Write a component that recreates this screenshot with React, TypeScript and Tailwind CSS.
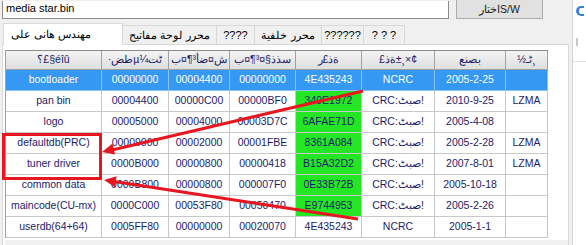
import React from 'react';

const headers = ['؟£§éîû', '·طضµ¼ٹت', 'ش¤ضأ³¶¤ب', 'سذذ§¤³¶¤ب', 'ةذ£ر', '£ةذ±¸×¢', 'بصنع', '½ٹـ¸'];

const rows = [
  ['bootloader', '00000000', '00004400', '00000000', '4E435243', 'NCRC', '2005-2-25', ''],
  ['pan bin', '00004400', '00000C00', '00000BF0', '349E1972', 'CRC', '2010-9-25', 'LZMA'],
  ['logo', '00005000', '00004000', '00003D7C', '6AFAE71D', 'CRC', '2005-4-08', ''],
  ['defaultdb(PRC)', '00009000', '00002000', '00001FBE', '8361A084', 'CRC', '2005-2-28', 'LZMA'],
  ['tuner driver', '0000B000', '00000800', '00000418', 'B15A32D2', 'CRC', '2007-8-01', 'LZMA'],
  ['common data', '0000B800', '00000800', '000007F0', '0E33B72B', 'CRC', '2005-10-18', ''],
  ['maincode(CU-mx)', '0000C000', '00053F80', '00050470', 'E9744953', 'CRC', '2005-2-26', ''],
  ['userdb(64+64)', '0005FF80', '00000000', '00020070', '4E435243', 'NCRC', '2005-1-1', ''],
];

const tabs = [
  { label: 'محرر لوحة مفاتيح', w: 'w-[94px]' },
  { label: '????', w: 'w-[38px]' },
  { label: 'محرر خلفية', w: 'w-[67px]' },
  { label: '??????', w: 'w-[42px]' },
  { label: '? ? ?', w: 'w-[41px]' },
];

// CRC cell: latin part, then an isolated arabic run, then "!"
const CrcText = ({ value }: { value: string }) =>
  value === 'CRC' ? (
    <span className="flex items-center">
      <span>CRC:</span>
      <span className="inline-block" dir="rtl">صبٹ</span>
      <span>!</span>
    </span>
  ) : (
    <span>{value}</span>
  );

const App = () => {
  return (
    <div className="relative w-[586px] h-[245px] overflow-hidden bg-[#f0f0f0] flex font-['Liberation_Sans',sans-serif]">
      {/* main window */}
      <div className="w-[573px] h-full flex flex-col border-r border-[#d4d4d4]">
        {/* file row */}
        <div className="flex items-end h-[19px] shrink-0">
          <div className="ml-[2px] w-[447px] h-[18px] bg-white border border-t-0 border-[#8c8c8c] pl-[3px] text-[11px] leading-[15px] text-black">
            media star.bin
          </div>
          <button className="ml-[7px] w-[87px] h-[19px] bg-[#e1e1e1] border border-t-0 border-[#adadad] text-[10.5px] text-[#1a1a1a] leading-[17px]">
            <span dir="ltr">اختارS/W</span>
          </button>
        </div>

        {/* tabs */}
        <div className="flex items-end h-[25px] pl-[3px] shrink-0">
          <div className="w-[120px] h-[22px] bg-white border border-b-0 border-[#d9d9d9] text-[11px] leading-[20px] text-black pl-[7px] relative top-[1px] z-10">
            مهندس هانى على
          </div>
          {tabs.map((t, i) => (
            <div
              key={i}
              className={`${t.w} h-[19px] border border-b-0 border-l-0 border-[#d9d9d9] text-[11px] leading-[18px] text-black text-center`}
            >
              {t.label}
            </div>
          ))}
        </div>

        {/* tab panel */}
        <div className="ml-[2px] w-[567px] flex-1 min-h-0 bg-white border border-b-0 border-[#d9d9d9] pt-[5px] pl-[2px]">
          <div className="w-[543px] border-l border-[#a0a0a0] text-[10.5px] text-[#1c1c6a]">
            {/* header */}
            <div className="grid grid-cols-[96px_67px_61px_66px_66px_73px_71px_42px] h-[20px] border-t border-[#8c8c8c]">
              {headers.map((h, i) => (
                <div
                  key={i}
                  className="flex items-center justify-center bg-gradient-to-b from-[#f4f4f4] to-[#dedede] border-r border-b border-[#a0a0a0] whitespace-nowrap"
                >
                  {h}
                </div>
              ))}
            </div>
            {/* body */}
            {rows.map((r, ri) => (
              <div
                key={ri}
                className="grid grid-cols-[96px_67px_61px_66px_66px_73px_71px_42px] h-[21px]"
              >
                {r.map((c, ci) => {
                  const selected = ri === 0;
                  const green = ci === 4 && ri > 0 && ri < 7;
                  return (
                    <div
                      key={ci}
                      className={
                        selected
                          ? 'flex items-center justify-center bg-[#3598f2] text-white border-r border-b border-[#8cc2f5] whitespace-nowrap'
                          : green
                          ? 'flex items-center justify-center bg-[#25e625] border-r border-b border-[#c8c8c8] whitespace-nowrap'
                          : 'flex items-center justify-center bg-white border-r border-b border-[#c8c8c8] whitespace-nowrap'
                      }
                    >
                      {ci === 5 ? <CrcText value={c} /> : c}
                    </div>
                  );
                })}
              </div>
            ))}
          </div>
          <div className="h-[8px] bg-[#f0f0f0] mt-[2px]" />
        </div>
      </div>

      {/* neighbouring window edge */}
      <div className="flex-1 bg-white flex flex-col">
        <div className="h-[62px] border-b border-[#e2e2e2] pt-[6px] pl-[3px]">
          <div className="w-[8px] h-[10px] rounded-l-full border-l-[3px] border-t-2 border-b-2 border-[#3b82d6]" />
          <div className="mt-[22px] w-[2px] h-[8px] bg-[#c8c8c8]" />
        </div>
      </div>

      {/* annotations */}
      <svg className="absolute left-0 top-0 pointer-events-none" width="586" height="245">
        <rect x="3.5" y="134.5" width="97" height="44" fill="none" stroke="#e8161e" strokeWidth="3" />
        <line x1="363" y1="91" x2="112" y2="150" stroke="#e8161e" strokeWidth="3" />
        <polygon points="102,152 115,154.5 112.5,143.5" fill="#e8161e" />
        <line x1="358" y1="219" x2="114" y2="181.5" stroke="#e8161e" strokeWidth="3" />
        <polygon points="104,180 116.6,176.2 115,187.2" fill="#e8161e" />
      </svg>
    </div>
  );
};

export default App;
